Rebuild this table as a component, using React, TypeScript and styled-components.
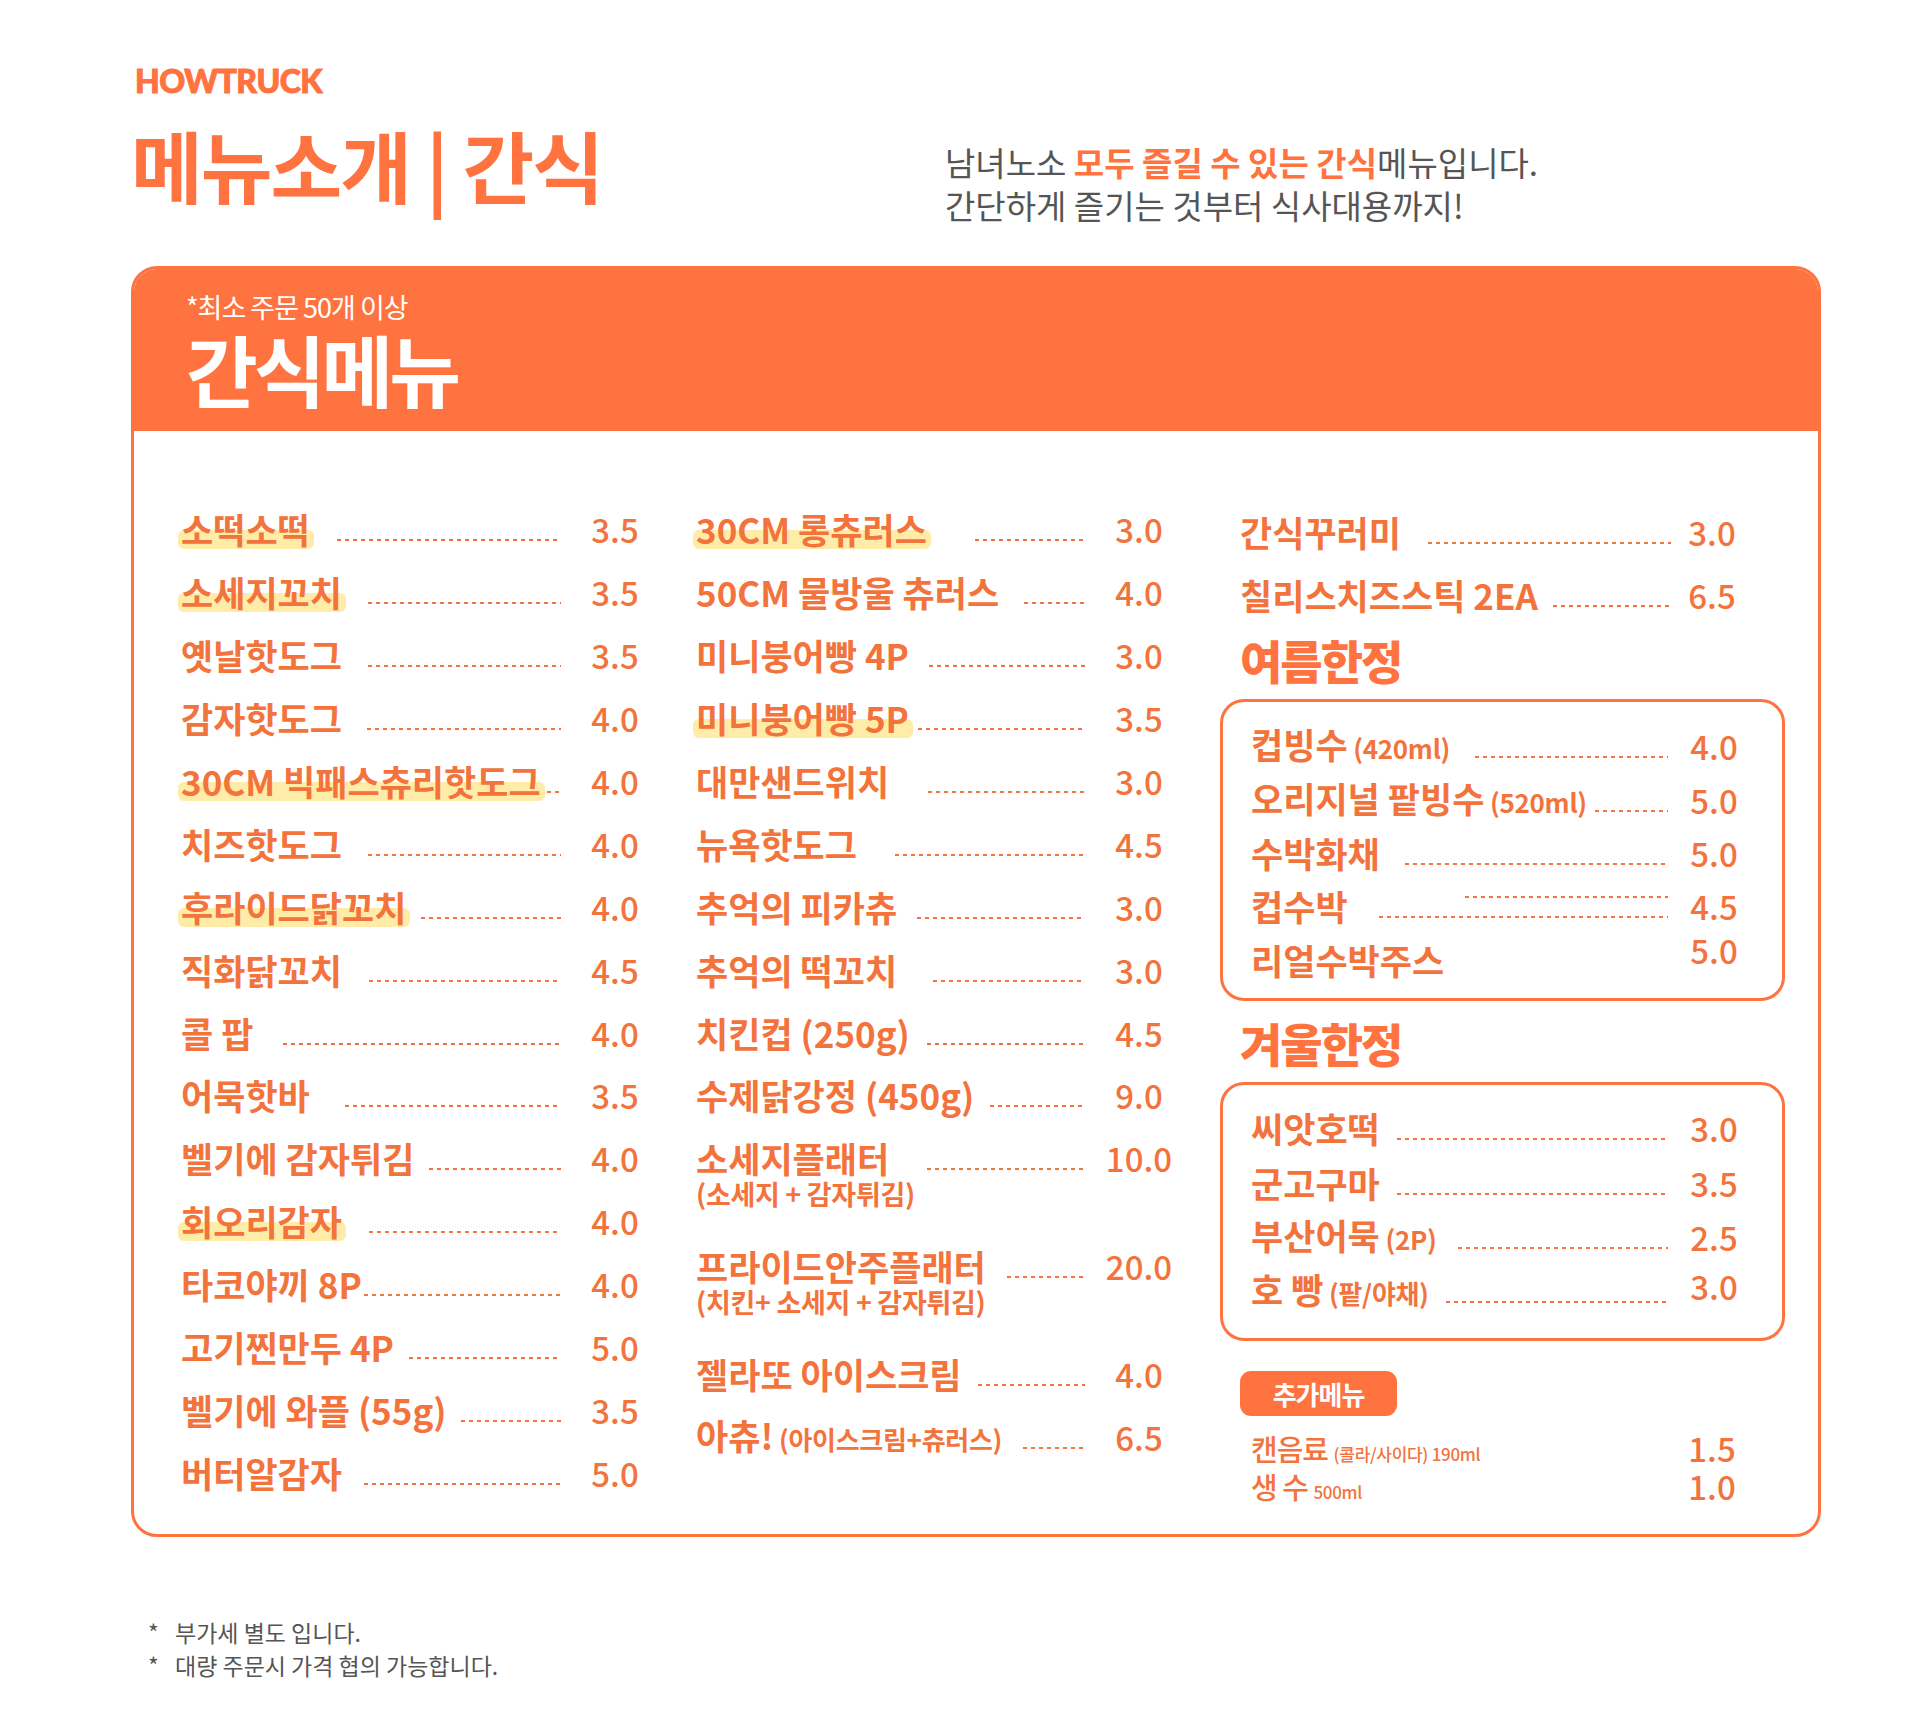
import React from 'react';
import styled, { createGlobalStyle } from 'styled-components';

const ORANGE = '#FF7340';
const INK = '#F3733C';
const GREY = '#555555';

type Item = {
  name: string;
  small?: string;
  sub?: string;
  price: string;
  gap?: number;
  hl?: boolean;
  double?: boolean;
  noLeader?: boolean;
  lift?: number;
};

const snackA: Item[] = [
  { name: '소떡소떡', price: '3.5', gap: 27, hl: true },
  { name: '소세지꼬치', price: '3.5', gap: 26, hl: true },
  { name: '옛날핫도그', price: '3.5', gap: 26 },
  { name: '감자핫도그', price: '4.0', gap: 25 },
  { name: '30CM 빅패스츄리핫도그', price: '4.0', gap: 6, hl: true },
  { name: '치즈핫도그', price: '4.0', gap: 26 },
  { name: '후라이드닭꼬치', price: '4.0', gap: 15, hl: true },
  { name: '직화닭꼬치', price: '4.5', gap: 27 },
  { name: '콜 팝', price: '4.0', gap: 30 },
  { name: '어묵핫바', price: '3.5', gap: 35 },
  { name: '벨기에 감자튀김', price: '4.0', gap: 15 },
  { name: '회오리감자', price: '4.0', gap: 27, hl: true },
  { name: '타코야끼 8P', price: '4.0', gap: 2 },
  { name: '고기찐만두 4P', price: '5.0', gap: 15 },
  { name: '벨기에 와플 (55g)', price: '3.5', gap: 14 },
  { name: '버터알감자', price: '5.0', gap: 22 },
];

const snackB: Item[] = [
  { name: '30CM 롱츄러스', price: '3.0', gap: 48, hl: true },
  { name: '50CM 물방울 츄러스', price: '4.0', gap: 25 },
  { name: '미니붕어빵 4P', price: '3.0', gap: 20 },
  { name: '미니붕어빵 5P', price: '3.5', gap: 9, hl: true },
  { name: '대만샌드위치', price: '3.0', gap: 39 },
  { name: '뉴욕핫도그', price: '4.5', gap: 38 },
  { name: '추억의 피카츄', price: '3.0', gap: 20 },
  { name: '추억의 떡꼬치', price: '3.0', gap: 36 },
  { name: '치킨컵 (250g)', price: '4.5', gap: 17 },
  { name: '수제닭강정 (450g)', price: '9.0', gap: 16 },
  { name: '소세지플래터', sub: '(소세지 + 감자튀김)', price: '10.0', gap: 38 },
  { name: '프라이드안주플래터', sub: '(치킨+ 소세지 + 감자튀김)', price: '20.0', gap: 21 },
  { name: '젤라또 아이스크림', price: '4.0', gap: 16 },
  { name: '아츄!', small: '(아이스크림+츄러스)', price: '6.5', gap: 21 },
];

const snackC: Item[] = [
  { name: '간식꾸러미', price: '3.0', gap: 27 },
  { name: '칠리스치즈스틱 2EA', price: '6.5', gap: 15 },
];

const summer: Item[] = [
  { name: '컵빙수', small: '(420ml)', price: '4.0', gap: 25 },
  { name: '오리지널 팥빙수', small: '(520ml)', price: '5.0', gap: 8 },
  { name: '수박화채', price: '5.0', gap: 25 },
  { name: '컵수박', price: '4.5', gap: 31, double: true },
  { name: '리얼수박주스', price: '5.0', noLeader: true, lift: -10 },
];

const winter: Item[] = [
  { name: '씨앗호떡', price: '3.0', gap: 17 },
  { name: '군고구마', price: '3.5', gap: 17 },
  { name: '부산어묵', small: '(2P)', price: '2.5', gap: 21 },
  { name: '호 빵', small: '(팥/야채)', price: '3.0', gap: 17, lift: -5 },
];

const extras = [
  { name: '캔음료', small: '(콜라/사이다) 190ml', price: '1.5' },
  { name: '생 수', small: '500ml', price: '1.0' },
];

const GlobalStyle = createGlobalStyle`
  html, body {
    margin: 0;
    background: #ffffff;
  }
  body {
    font-family: "Noto Sans CJK KR", "Noto Sans", sans-serif;
    -webkit-font-smoothing: antialiased;
  }
`;

const Page = styled.div`
  width: 1920px;
  box-sizing: border-box;
  padding: 64px 99px 40px 131px;
`;

const Top = styled.header`
  display: flex;
`;

const Brand = styled.div`
  width: 814px;
  flex-shrink: 0;
`;

const Logo = styled.div`
  font-family: Lato, "Open Sans", sans-serif;
  font-weight: 900;
  font-size: 32px;
  line-height: 33px;
  color: ${ORANGE};
  letter-spacing: -0.5px;
  -webkit-text-stroke: 1px ${ORANGE};
  padding-left: 4px;
`;

const Title = styled.h1`
  margin: 28px 0 0;
  font-size: 78px;
  line-height: 78px;
  font-weight: 700;
  letter-spacing: -2px;
  color: ${ORANGE};
  white-space: pre;
`;

const Lead = styled.p`
  margin: 77px 0 0;
  font-size: 33px;
  line-height: 43px;
  font-weight: 400;
  letter-spacing: 0;
  color: ${GREY};
`;

const Em = styled.strong`
  color: ${ORANGE};
  font-weight: 700;
`;

const Card = styled.section`
  margin-top: 39px;
  border: 3px solid ${ORANGE};
  border-radius: 26px;
  overflow: hidden;
`;

const CardHead = styled.div`
  background: ${ORANGE};
  height: 162px;
  box-sizing: border-box;
  padding: 22px 0 0 52px;
  color: #ffffff;
`;

const MinOrder = styled.div`
  font-size: 27px;
  line-height: 32px;
  font-weight: 400;
  letter-spacing: -1px;
`;

const CardTitle = styled.h2`
  margin: 5px 0 0;
  font-size: 78px;
  line-height: 80px;
  font-weight: 700;
  letter-spacing: -4px;
`;

const Body = styled.div`
  display: grid;
  grid-template-columns: 474px 483px 565px;
  column-gap: 41px;
  padding: 67px 33px 29px 47px;
  align-items: start;
`;

const Column = styled.div`
  display: flex;
  flex-direction: column;
`;

const Entry = styled.div<{ $h: number }>`
  display: flex;
  flex-direction: column;
  min-height: ${p => p.$h}px;
`;

const Line = styled.div<{ $h: number }>`
  display: flex;
  align-items: center;
  height: ${p => p.$h}px;
`;

const Name = styled.span<{ $hl?: boolean }>`
  position: relative;
  isolation: isolate;
  flex-shrink: 0;
  white-space: pre;
  font-size: 35px;
  line-height: 42px;
  font-weight: 700;
  letter-spacing: 0;
  color: ${INK};

  &::before {
    content: '';
    display: ${p => (p.$hl ? 'block' : 'none')};
    position: absolute;
    left: -3px;
    right: -4px;
    top: 22px;
    bottom: 1px;
    border-radius: 6px;
    background: #ffeca8;
    z-index: -1;
  }
`;

const Small = styled.span<{ $size: number }>`
  font-size: ${p => p.$size}px;
  letter-spacing: -0.3px;
`;

const Sub = styled.div`
  margin: -10px 0 27px;
  font-size: 27px;
  line-height: 28px;
  font-weight: 700;
  letter-spacing: -0.3px;
  color: ${INK};
`;

const Leader = styled.span<{ $gap: number; $end: number; $double?: boolean; $off?: boolean }>`
  position: relative;
  flex: 1;
  min-width: 6px;
  height: 2px;
  margin: 22px ${p => p.$end}px 0 ${p => p.$gap}px;
  background: ${p =>
    p.$off ? 'none' : `repeating-linear-gradient(90deg, ${INK} 0 4px, transparent 4px 8px)`};

  &::before {
    content: '';
    display: ${p => (p.$double ? 'block' : 'none')};
    position: absolute;
    left: 86px;
    right: 0;
    top: -20px;
    height: 2px;
    background: repeating-linear-gradient(90deg, ${INK} 0 4px, transparent 4px 8px);
  }
`;

const Price = styled.span<{ $lift?: number }>`
  width: 80px;
  flex-shrink: 0;
  text-align: center;
  font-size: 33px;
  line-height: 40px;
  font-weight: 500;
  color: ${INK};
  transform: translateY(${p => p.$lift || 0}px);
`;

const SideList = styled.div`
  display: flex;
  flex-direction: column;
  padding: 3px 33px 0 20px;
`;

const Season = styled.h3`
  margin: 7px 0 15px 20px;
  font-size: 46px;
  line-height: 50px;
  font-weight: 900;
  letter-spacing: -2px;
  color: ${ORANGE};
`;

const Box = styled.div<{ $top: number; $bottom: number }>`
  border: 3px solid ${ORANGE};
  border-radius: 24px;
  padding: ${p => p.$top}px 28px ${p => p.$bottom}px 28px;
  display: flex;
  flex-direction: column;
`;

const WinterTitle = styled(Season)`
  margin-top: 16px;
`;

const Badge = styled.div`
  align-self: flex-start;
  margin: 30px 0 0 20px;
  width: 157px;
  height: 45px;
  border-radius: 11px;
  background: ${ORANGE};
  color: #ffffff;
  font-size: 26px;
  font-weight: 700;
  letter-spacing: -1px;
  display: flex;
  align-items: center;
  justify-content: center;
`;

const Extras = styled.div`
  margin: 13px 33px 0 31px;
  display: flex;
  flex-direction: column;
`;

const ExtraRow = styled.div`
  display: flex;
  align-items: center;
  height: 38px;
`;

const ExtraName = styled.span`
  flex: 1;
  font-size: 29px;
  font-weight: 500;
  letter-spacing: -1px;
  color: ${INK};
  white-space: pre;
`;

const Notes = styled.ul`
  list-style: none;
  margin: 79px 0 0 17px;
  padding: 0;
  font-size: 23px;
  line-height: 33px;
  color: ${GREY};
`;

const Note = styled.li`
  display: flex;
`;

const Star = styled.span`
  width: 27px;
  flex-shrink: 0;
`;

const MenuRow = ({ item, h, end }: { item: Item; h: number; end: number }) => (
  <Entry $h={h}>
    <Line $h={h}>
      <Name $hl={item.hl}>
        {item.name}
        {item.small && <Small $size={26}> {item.small}</Small>}
      </Name>
      <Leader
        $gap={item.gap ?? 20}
        $end={end}
        $double={item.double}
        $off={item.noLeader}
      />
      <Price $lift={item.lift}>{item.price}</Price>
    </Line>
    {item.sub && <Sub>{item.sub}</Sub>}
  </Entry>
);

export default function App() {
  return (
    <Page>
      <GlobalStyle />
      <Top>
        <Brand>
          <Logo>HOWTRUCK</Logo>
          <Title>메뉴소개 | 간식</Title>
        </Brand>
        <Lead>
          남녀노소 <Em>모두 즐길 수 있는 간식</Em>메뉴입니다.
          <br />
          간단하게 즐기는 것부터 식사대용까지!
        </Lead>
      </Top>

      <Card>
        <CardHead>
          <MinOrder>*최소 주문 50개 이상</MinOrder>
          <CardTitle>간식메뉴</CardTitle>
        </CardHead>
        <Body>
          <Column>
            {snackA.map(item => (
              <MenuRow key={item.name} item={item} h={62.9} end={14} />
            ))}
          </Column>
          <Column>
            {snackB.map(item => (
              <MenuRow key={item.name} item={item} h={62.9} end={14} />
            ))}
          </Column>
          <Column>
            <SideList>
              {snackC.map(item => (
                <MenuRow key={item.name} item={item} h={62.9} end={1} />
              ))}
            </SideList>
            <Season>여름한정</Season>
            <Box $top={18} $bottom={12}>
              {summer.map(item => (
                <MenuRow key={item.name} item={item} h={53.3} end={6} />
              ))}
            </Box>
            <WinterTitle>겨울한정</WinterTitle>
            <Box $top={16} $bottom={20}>
              {winter.map(item => (
                <MenuRow key={item.name} item={item} h={54.3} end={6} />
              ))}
            </Box>
            <Badge>추가메뉴</Badge>
            <Extras>
              {extras.map(x => (
                <ExtraRow key={x.name}>
                  <ExtraName>
                    {x.name} <Small $size={17}>{x.small}</Small>
                  </ExtraName>
                  <Price>{x.price}</Price>
                </ExtraRow>
              ))}
            </Extras>
          </Column>
        </Body>
      </Card>

      <Notes>
        <Note>
          <Star>*</Star>부가세 별도 입니다.
        </Note>
        <Note>
          <Star>*</Star>대량 주문시 가격 협의 가능합니다.
        </Note>
      </Notes>
    </Page>
  );
}
